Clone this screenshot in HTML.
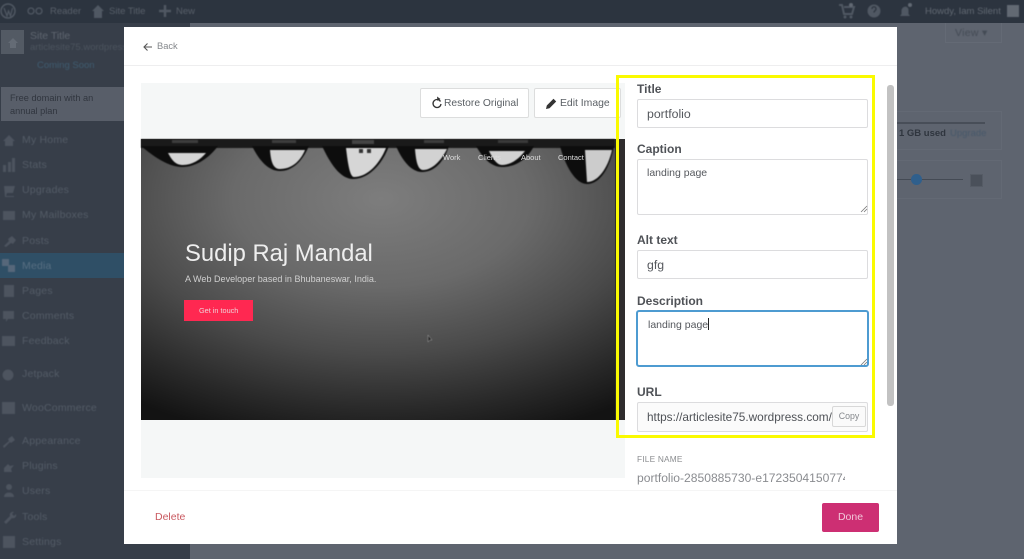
<!DOCTYPE html>
<html><head><meta charset="utf-8"><style>
html,body{margin:0;padding:0;width:1024px;height:559px;overflow:hidden;background:#5e646f;font-family:"Liberation Sans",sans-serif}
.a{position:absolute;white-space:nowrap}
#bar{left:0;top:0;width:1024px;height:23px;background:#2c343f}
#side{left:0;top:23px;width:190px;height:536px;background:#373e49}
.n{left:22px;font-size:10.5px;color:#545c67;letter-spacing:.2px;filter:blur(.4px)}
.t{font-size:9.5px;color:#59606a;filter:blur(.4px)}
svg{position:absolute;overflow:visible}
#modal{left:124px;top:27px;width:773px;height:517px;background:#fff}
.lb{left:637px;font-size:12px;font-weight:bold;color:#4f5257;filter:blur(.25px)}
.in{box-sizing:border-box;left:637px;width:231px;background:#fff;border:1px solid #dcdcde;border-radius:2px;color:#55585d;padding-left:9px}
</style></head><body>
<div class="a" id="bar"></div><div class="a" id="side"></div>

<!-- admin bar -->
<svg style="left:0;top:0;filter:blur(.4px)" width="1024" height="23" fill="none">
<circle cx="8" cy="11" r="7" stroke="#505863" stroke-width="1.5"/><path d="M4 8l3 8 1.500-5 2 5 2-8" stroke="#505863" stroke-width="1.200"/>
<circle cx="31" cy="11" r="3" stroke="#505863" stroke-width="1.300"/><circle cx="39" cy="11" r="3" stroke="#505863" stroke-width="1.300"/>
<path d="M92 11l6-6 6 6h-2v7h-8v-7z" fill="#505863"/>
<path d="M165 5v12M159 11h12" stroke="#505863" stroke-width="2.500"/>
<path d="M839 5h3l2 9h8l2-7h-10" stroke="#505863" stroke-width="2"/><circle cx="845" cy="17" r="1.500" fill="#505863"/><circle cx="851" cy="17" r="1.500" fill="#505863"/><circle cx="851" cy="5" r="2" fill="#626973"/>
<circle cx="874" cy="11" r="6.500" fill="#505863"/><path d="M872 9c0-3 4-3 4 0 0 2-2 1.500-2 3.500" stroke="#2c343f" stroke-width="1.300"/>
<path d="M900 16h10l-1.500-2v-4c0-4-5.500-5-7 0v4z" fill="#505863"/><circle cx="910" cy="5" r="2" fill="#626973"/>
<rect x="1007" y="5" width="12" height="12" fill="#626973"/>
</svg>
<div class="a t" style="left:50px;top:6px">Reader</div>
<div class="a t" style="left:109px;top:6px">Site Title</div>
<div class="a t" style="left:176px;top:6px">New</div>
<div class="a t" style="left:925px;top:6px;color:#626973">Howdy, Iam Silent</div>

<!-- sidebar -->
<div class="a" style="left:1px;top:30px;width:23px;height:24px;background:#535a64"></div>
<svg style="left:0;top:0" width="30" height="60"><path d="M8 43l5-5 5 5h-2v5h-6v-5z" fill="#646b75"/></svg>
<div class="a" style="left:30px;top:30px;font-size:10.500px;color:#5f6670;filter:blur(.4px)">Site Title</div>
<div class="a" style="left:30px;top:42px;width:94px;overflow:hidden;font-size:9.500px;color:#4c545e;filter:blur(.4px)">articlesite75.wordpress.com</div>
<div class="a" style="left:37px;top:60px;font-size:9.500px;color:#3f5c70;filter:blur(.4px)">Coming Soon</div>
<div class="a" style="left:1px;top:87px;width:123px;height:34px;background:#585e69"></div>
<div class="a" style="left:10px;top:92px;font-size:9.200px;line-height:12.500px;color:#31363f;white-space:normal;width:100px;filter:blur(.3px)">Free domain with an annual plan</div>
<div class="a" style="left:0;top:253px;width:124px;height:25px;background:#2f4f66"></div>

<svg style="left:0;top:0;filter:blur(.5px)" width="22" height="559" fill="#4d545f">
<path d="M3 141l6-6 6 6h-2v5h-8v-5z"/><path d="M3 165h3v7H3zM8 162h3v10H8zM12 158h3v14h-3z"/>
<path d="M4 186h11l-2 7H7l-1 3h8v1H5z"/><rect x="3" y="211" width="12" height="9"/>
<path d="M4 246l5-5-1-2 4-3 4 4-3 4-2-1-5 4z"/>
<path d="M2 259h7v7H2zM8 265h7v7H8z" fill="#56677a"/>
<path d="M4 285h10v12H4z"/><path d="M3 311h11v8H8l-2 3v-3H3z"/><path d="M2 336h13v10H2z"/>
<circle cx="8" cy="375" r="5.500"/><rect x="2" y="402" width="13" height="12"/>
<path d="M3 446l6-5-1-2 4-3 3 4-4 3-1-1-6 6z"/><path d="M4 472v-4l4-4 2 2 4-1-3 4 1 3z"/>
<circle cx="9" cy="487" r="3"/><path d="M4 497c0-6 10-6 10 0z"/>
<path d="M4 522l6-6c-1-3 2-5 4-4l-2 2 2 2 2-2c1 3-2 5-4 4l-6 6z"/><rect x="3" y="536" width="12" height="12"/>
</svg>
<div class="a n" style="top:134px">My Home</div>
<div class="a n" style="top:159px">Stats</div>
<div class="a n" style="top:184px">Upgrades</div>
<div class="a n" style="top:209px">My Mailboxes</div>
<div class="a n" style="top:235px">Posts</div>
<div class="a n" style="top:260px;color:#586f82">Media</div>
<div class="a n" style="top:285px">Pages</div>
<div class="a n" style="top:310px">Comments</div>
<div class="a n" style="top:335px">Feedback</div>
<div class="a n" style="top:368px">Jetpack</div>
<div class="a n" style="top:402px">WooCommerce</div>
<div class="a n" style="top:435px">Appearance</div>
<div class="a n" style="top:460px">Plugins</div>
<div class="a n" style="top:485px">Users</div>
<div class="a n" style="top:511px">Tools</div>
<div class="a n" style="top:536px">Settings</div>

<!-- right background -->
<div class="a" style="left:945px;top:23px;width:57px;height:20px;border:1px solid #646a75;border-top:0;box-sizing:border-box"></div>
<div class="a" style="left:955px;top:27px;font-size:10.500px;color:#444b55;letter-spacing:.3px;filter:blur(.4px)">View ▾</div>
<div class="a" style="left:897px;top:111px;width:105px;height:39px;border:1px solid #636974;border-left:0;box-sizing:border-box"></div>
<div class="a" style="left:897px;top:122px;width:88px;height:2px;background:#484e58"></div>
<div class="a" style="left:899px;top:128px;font-size:9.500px;color:#2f353e;font-weight:bold;filter:blur(.3px)">1 GB used</div>
<div class="a" style="left:950px;top:128px;font-size:9.500px;color:#47586a;filter:blur(.4px)">Upgrade</div>
<div class="a" style="left:897px;top:160px;width:105px;height:39px;border:1px solid #636974;border-left:0;box-sizing:border-box"></div>
<div class="a" style="left:897px;top:179px;width:66px;height:1px;background:#444a54"></div>
<div class="a" style="left:911px;top:174px;width:11px;height:11px;border-radius:50%;background:#2f5f8c"></div>
<div class="a" style="left:970px;top:174px;width:11px;height:11px;background:#4a505a;border:1px solid #555b65"></div>

<!-- modal -->
<div class="a" id="modal"></div>
<div class="a" style="left:124px;top:65px;width:773px;height:1px;background:#eeeeef"></div>
<svg style="left:142px;top:41px" width="12" height="12" fill="none"><path d="M10 6H2M5.500 2.500L2 6l3.500 3.500" stroke="#555" stroke-width="1.100"/></svg>
<div class="a" style="left:157px;top:41px;font-size:9.300px;color:#85888c">Back</div>

<!-- image panel -->
<div class="a" style="left:141px;top:83px;width:484px;height:395px;background:#f5f7f7"></div>
<div class="a" style="left:420px;top:88px;width:109px;height:30px;box-sizing:border-box;background:#fff;border:1px solid #dcdddd;border-radius:2px"></div>
<svg style="left:432px;top:96px" width="11" height="14" fill="none"><path d="M9 5.500A4 4 0 1 0 9.500 8" stroke="#333" stroke-width="1.300" transform="translate(-.5 0)"/><path d="M5 0.500l3.500 2.500-3 2z" fill="#333"/></svg>
<div class="a" style="left:444px;top:98px;font-size:10.300px;color:#5a5f64">Restore Original</div>
<div class="a" style="left:534px;top:88px;width:87px;height:30px;box-sizing:border-box;background:#fff;border:1px solid #dcdddd;border-radius:2px"></div>
<svg style="left:546px;top:98px" width="11" height="11"><path d="M0 11l.8-3.500L7.500.8 10.200 3.500 3.500 10.200z" fill="#333"/></svg>
<div class="a" style="left:560px;top:98px;font-size:10.400px;color:#5a5f64">Edit Image</div>

<!-- image -->
<div class="a" style="left:141px;top:139px;width:484px;height:281px;overflow:hidden;background:radial-gradient(ellipse 420px 250px at 240px 60px,#7d7d7d 0,#6a6a6a 35%,#4a4a4a 62%,#282828 85%,#131313 100%)">
 <div class="a" style="left:474px;top:0;width:10px;height:281px;background:#2f2d2e"></div>
</div>
<svg style="left:0;top:0;filter:blur(.5px)" width="1024" height="559">
<defs><clipPath id="c"><rect x="141" y="139" width="484" height="281"/></clipPath></defs>
<g clip-path="url(#c)">
<rect x="141" y="139" width="474" height="9" fill="#1a1a1a"/>
<rect x="172" y="140" width="26" height="3" fill="#3d3d3d"/><rect x="272" y="140" width="24" height="3" fill="#3d3d3d"/><rect x="352" y="140" width="22" height="4" fill="#444"/><rect x="424" y="140" width="20" height="3" fill="#3d3d3d"/><rect x="498" y="140" width="30" height="3" fill="#3a3a3a"/>
<path d="M141 146H218C209 158 196 167 182 167 169 167 154 157 141 146Z" fill="#0d0d0d"/>
<path d="M168 153H206C200 160 192 165 183 165 175 165 172 160 168 153Z" fill="#d4d4d4"/>
<path d="M252 146H309C302 162 292 171 280 171 268 171 259 160 252 146Z" fill="#0d0d0d"/>
<path d="M270 150H305C300 162 291 169 280 169 274 169 271 164 270 150Z" fill="#d2d2d2"/>
<path d="M322 146H389C382 165 368 179 353 179 340 179 330 163 322 146Z" fill="#0d0d0d"/>
<path d="M346 148H386C380 163 368 177 354 177 350 177 348 165 346 148Z" fill="#d6d6d6"/>
<rect x="359" y="149" width="4" height="4" fill="#333"/><rect x="367" y="149" width="4" height="4" fill="#333"/>
<path d="M396 146H449C444 162 434 172 422 172 411 172 402 160 396 146Z" fill="#0d0d0d"/>
<path d="M415 149H447C441 161 432 170 423 170 418 170 416 162 415 149Z" fill="#d2d2d2"/>
<path d="M476 146H534C527 160 515 167 502 167 491 167 483 158 476 146Z" fill="#0d0d0d"/>
<path d="M489 151H525C518 160 510 165 502 165 497 165 493 159 489 151Z" fill="#d2d2d2"/>
<path d="M560 146H614C610 168 600 184 587 184 575 184 565 165 560 146Z" fill="#0d0d0d"/>
<path d="M585 150H612C608 168 598 182 587 182Z" fill="#cccccc"/>
<path d="M428 335l0 7 2-2 2 0z" fill="#222" stroke="#aaa" stroke-width=".5"/>
</g></svg>
<div class="a" style="left:443px;top:153px;font-size:7.500px;color:#ddd;filter:blur(.3px)">Work</div>
<div class="a" style="left:478px;top:153px;font-size:7.500px;color:#ddd;filter:blur(.3px)">Clients</div>
<div class="a" style="left:521px;top:153px;font-size:7.500px;color:#ddd;filter:blur(.3px)">About</div>
<div class="a" style="left:558px;top:153px;font-size:7.500px;color:#ddd;filter:blur(.3px)">Contact</div>
<div class="a" style="left:185px;top:240px;font-size:23.800px;color:#eee">Sudip Raj Mandal</div>
<div class="a" style="left:185px;top:274px;font-size:9.050px;color:#cfcfcf">A Web Developer based in Bhubaneswar, India.</div>
<div class="a" style="left:184px;top:300px;width:69px;height:21px;background:#ff2851"></div>
<div class="a" style="left:199px;top:306px;font-size:7.300px;color:#f0d0d6">Get in touch</div>

<!-- right column -->
<div class="a" style="left:625px;top:66px;width:260px;height:424px;background:#fff"></div>
<div class="a" style="left:887px;top:85px;width:7px;height:321px;border-radius:3px;background:#c2c2c2"></div>

<div class="a lb" style="top:82px">Title</div>
<div class="a in" style="top:99px;height:29px;line-height:28px;font-size:12.300px">portfolio</div>
<div class="a lb" style="top:142px">Caption</div>
<div class="a in" style="top:159px;height:56px;font-size:10.500px;padding-top:7px">landing page</div>
<div class="a lb" style="top:233px">Alt text</div>
<div class="a in" style="top:250px;height:29px;line-height:29px;font-size:12.300px">gfg</div>
<div class="a lb" style="top:294px">Description</div>
<div class="a in" style="top:310px;height:57px;font-size:10.500px;padding-top:6px;border:2px solid #4e9bd1;left:636px;width:233px;padding-left:10px;color:#55585d;border-radius:3px">landing page<span style="display:inline-block;width:1px;height:12px;background:#222;vertical-align:-2px"></span></div>
<svg style="left:860px;top:205px" width="8" height="8" fill="none" stroke="#777" stroke-width=".8"><path d="M1 7l6-6M4 7l3-3"/></svg>
<svg style="left:860px;top:358px" width="8" height="8" fill="none" stroke="#777" stroke-width=".8"><path d="M1 7l6-6M4 7l3-3"/></svg>
<div class="a lb" style="top:385px">URL</div>
<div class="a in" style="top:402px;height:30px;line-height:29px;font-size:11.800px;background:#fbfbfb;overflow:hidden;color:#4f5257">https://articlesite75.wordpress.com/</div>
<div class="a" style="left:832px;top:406px;width:34px;height:21px;box-sizing:border-box;background:#fafafa;border:1px solid #d8d8d8;border-radius:2px;text-align:center;line-height:19px;font-size:8.800px;color:#85888c">Copy</div>

<div class="a" style="left:637px;top:454px;font-size:8.300px;color:#8b8d90;letter-spacing:.2px">FILE NAME</div>
<div class="a" style="left:637px;top:471px;width:208px;overflow:hidden;font-size:12.100px;color:#8a8c90">portfolio-2850885730-e1723504150774</div>

<!-- yellow box -->
<div class="a" style="left:616px;top:75px;width:259px;height:363px;box-sizing:border-box;border:3px solid #fafa00"></div>

<!-- footer -->
<div class="a" style="left:124px;top:490px;width:773px;height:54px;background:#fff;border-top:1px solid #f5f5f5;box-sizing:border-box"></div>
<div class="a" style="left:155px;top:511px;font-size:10.500px;color:#c9585f">Delete</div>
<div class="a" style="left:822px;top:503px;width:57px;height:29px;background:#cd2f73;border-radius:2px;text-align:center;line-height:29px;font-size:10.500px;color:#f2c8da">Done</div>
</body></html>
